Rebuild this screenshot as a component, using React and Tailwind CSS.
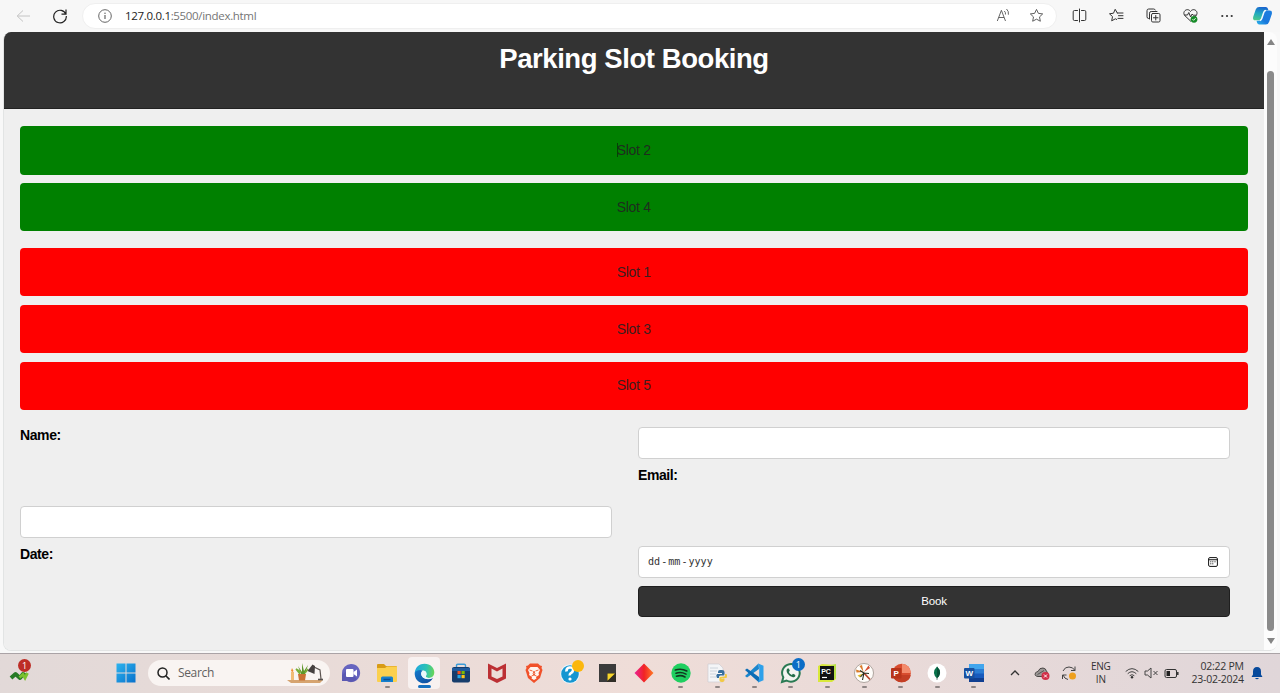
import React from "react";

function Icon({ size = 22, box = 24, className = "", children }) {
  return (
    <svg width={size} height={size} viewBox={`0 0 ${box} ${box}`} fill="none" className={`shrink-0 ${className}`}>
      {children}
    </svg>
  );
}

const line = { stroke: "#333", strokeWidth: 1, strokeLinecap: "round", strokeLinejoin: "round" };

function Toolbar() {
  return (
    <header className="flex h-8 shrink-0 items-center bg-[#f7f7f7] pb-px">
      <div className="flex w-[82px] shrink-0 items-center pl-4">
        <Icon size={16} box={16}>
          <path d="M14 8H1.5M7 2.500L1.200 8L7 13.500" stroke="#c4c4c4" strokeWidth="1" />
        </Icon>
        <Icon size={16} box={16} className="ml-5">
          <path d="M13.900 6.300A6.300 6.300 0 1 0 14.300 8M14 1.500v4.700H9.500" stroke="#222" strokeWidth="1.200" />
        </Icon>
      </div>
      <div className="flex h-[26px] w-[975px] shrink-0 items-center rounded-full border border-[#efefef] bg-white pr-3 pl-[15px]">
        <Icon size={14} box={14}>
          <circle cx="7" cy="7" r="6.300" stroke="#666" />
          <path d="M7 6v4" stroke="#555" strokeWidth="1.100" />
          <circle cx="7" cy="4.200" r=".7" fill="#555" />
        </Icon>
        <div className="ml-[13px] flex-1 font-['Open_Sans',sans-serif] text-[11.500px] tracking-[-0.320px] text-[#757575]">
          <span className="text-[#1c1c1c]">127.0.0.1</span>:5500/index.html
        </div>
        <Icon size={15} box={15} className="mr-[18px]">
          <path d="M1.300 13L5.400 2.300L9.500 13M2.700 9.500H8M8.300 3Q9.800 4.300 9.500 6.500M10.500 1Q13 3.200 12.400 6.700" stroke="#555" strokeWidth=".9" />
        </Icon>
        <Icon size={15} box={16}>
          <path d="M8 1.500l2 4.200 4.600.6-3.400 3.200.9 4.600L8 11.900l-4.100 2.200.9-4.600L1.400 6.300 6 5.700z" stroke="#555" strokeLinejoin="round" />
        </Icon>
      </div>
      <div className="flex flex-1 items-center pl-[15px]">
        <Icon size={15} box={15} className="mr-[22px]">
          <path d="M5.500 2.500H2.500a1.300 1.300 0 0 0-1.300 1.300v7.400a1.300 1.300 0 0 0 1.300 1.300h3M9.500 2.500h3a1.300 1.300 0 0 1 1.300 1.300v7.400a1.300 1.300 0 0 1-1.300 1.300h-3M7.500 1v13" {...line} />
        </Icon>
        <Icon size={15} box={15} className="mr-[22px]">
          <path d="M8.300 5L6.200 1.300 4.500 5.200l-4 .6 3 2.800-.8 4.200 3.700-2 1.300.7M8.300 5H14M9.500 7.700H14M9 10.400h5" {...line} />
        </Icon>
        <Icon size={15} box={15} className="mr-[22px]">
          <path d="M3.200 10.500H2.700A1.700 1.700 0 0 1 1 8.800V2.700A1.700 1.700 0 0 1 2.700 1h5A1.700 1.700 0 0 1 9.300 2M3.500 11V5.200a1.700 1.700 0 0 1 1.700-1.700H11" {...line} />
          <rect x="5.500" y="5.500" width="8.500" height="8.500" rx="1.300" {...line} />
          <path d="M9.750 7.500v4.500M7.500 9.750h4.500" {...line} />
        </Icon>
        <Icon size={15} box={15} className="mr-[22px]">
          <path d="M7.500 13L2 7.800C-.7 4.800 2 1.300 4.800 1.700c1.400.1 2.100 1 2.700 1.800.6-.8 1.300-1.700 2.700-1.800 2.800-.4 5.500 3.100 2.800 6.100z" {...line} />
          <path d="M1.500 7h3l1.300-2.500L7.600 9l1.500-3 1 1.200h2.500" {...line} />
          <circle cx="11" cy="11.300" r="3.400" fill="#168b28" />
          <path d="M9.500 11.200l1.100 1.100 2-2.100" stroke="#fff" strokeWidth=".9" />
        </Icon>
        <Icon size={14} box={14} className="mr-[18px]">
          <circle cx="2.300" cy="7" r="1.100" fill="#333" />
          <circle cx="7" cy="7" r="1.100" fill="#333" />
          <circle cx="11.700" cy="7" r="1.100" fill="#333" />
        </Icon>
        <Icon size={21} box={22}>
          <defs>
            <linearGradient id="cpA" x1="0.5" y1="0" x2="0.3" y2="1">
              <stop stopColor="#1a65cf" /><stop offset=".5" stopColor="#20a9c0" /><stop offset="1" stopColor="#4bc98a" />
            </linearGradient>
            <linearGradient id="cpB" x1="1" y1="0" x2="0" y2="1">
              <stop stopColor="#1d7fe0" /><stop offset=".6" stopColor="#1a78dc" /><stop offset="1" stopColor="#2cb5ea" />
            </linearGradient>
          </defs>
          <path d="M7.500 2h7q1.600 0 2.200 1.800l.5 1.700h-2.500q-1.700 0-2.300 2L10.200 14q-.7 2-2.600 2H3.500Q.5 16 1.200 12.500L4 4.500Q5 2 7.500 2z" fill="url(#cpA)" />
          <path d="M14.500 20.500h-7q-1.600 0-2.200-1.800l-.5-2.200h2.800q2 0 2.700-2l2.200-6.700q.6-2 2.500-2h3.500q3 0 2.300 3.500L18 17.500q-1 3-3.500 3z" fill="url(#cpB)" />
          <path d="M14.700 5.700q-1.700 0-2.300 1.900l-2.200 6.600q-.5 1.600-1.900 2" stroke="#eefaff" strokeWidth="1.600" />
        </Icon>
      </div>
    </header>
  );
}

function Slot({ label, color, caret }) {
  return (
    <div className={`flex h-[48.500px] items-center justify-center rounded-[4px] text-[14px] tracking-[-0.300px] text-[#222]/90 ${color}`}>
      <span className="relative">
        {caret && <span className="absolute top-[3px] left-0 h-[14px] w-px bg-[#063f06]" />}
        {label}
      </span>
    </div>
  );
}

const field = "flex h-[32px] w-full items-center rounded-[4px] border border-[#d0d0d0] bg-white";

function BookingPage() {
  return (
    <main className="min-w-0 flex-1 bg-[#efefef] font-['Liberation_Sans',Arial,sans-serif] text-black">
      <div className="flex h-[77px] justify-center border-b border-[#222] bg-[#333] pt-[11px]">
        <h1 className="text-[27.500px] leading-8 font-bold tracking-[-0.430px] text-white">Parking Slot Booking</h1>
      </div>
      <section className="mr-[16.500px] ml-4 mt-[17px] flex flex-col gap-[8.300px]">
        <Slot label="Slot 2" color="bg-[#008000]" caret />
        <Slot label="Slot 4" color="bg-[#008000]" />
      </section>
      <section className="mr-[16.500px] ml-4 mt-[16.700px] flex flex-col gap-[8.300px]">
        <Slot label="Slot 1" color="bg-[#ff0000]" />
        <Slot label="Slot 3" color="bg-[#ff0000]" />
        <Slot label="Slot 5" color="bg-[#ff0000]" />
      </section>
      <form className="mt-[17px] ml-4 grid grid-cols-[592px_592px] gap-x-[26px] text-[14px] leading-4 font-bold tracking-[-0.400px]">
        <label className="h-10">Name:</label>
        <div className={field} />
        <div className="h-[39px]" />
        <label className="h-[39px]">Email:</label>
        <div className={field} />
        <div className="h-10" />
        <label className="h-10">Date:</label>
        <div className={`${field} justify-between pr-[11px] pl-[9px] tracking-normal`}>
          <span className="font-['DejaVu_Sans_Mono',monospace] text-[10.100px] font-normal text-[#333]">
            dd<span className="mx-px">-</span>mm<span className="mx-px">-</span>yyyy
          </span>
          <Icon size={10} box={10}>
            <rect x=".6" y=".6" width="8.800" height="8.800" rx="1.300" stroke="#111" />
            <path d="M.6 2.700h8.800" stroke="#111" strokeWidth="1.100" />
            <path d="M4.300 4.800h1M6.500 4.800h1M2.300 6.800h1M4.300 6.800h1M2.300 4.800h1" stroke="#111" strokeWidth="1" />
          </Icon>
        </div>
        <div />
        <button type="button" className="h-[31px] rounded-[4px] border border-[#1f1f1f] bg-[#333] pb-px text-[11.500px] font-normal tracking-[-0.200px] text-white">Book</button>
      </form>
    </main>
  );
}

function Scrollbar() {
  return (
    <aside className="flex w-[13px] shrink-0 flex-col items-center bg-[#fcfcfc] pt-[6px] pb-[5px]">
      <Icon size={8} box={8}><path d="M4 1L8 7H0z" fill="#858585" /></Icon>
      <div className="mt-[25px] w-[7px] flex-1 rounded-full bg-[#8a8a8a]" />
      <Icon size={8} box={8} className="mt-[6px]"><path d="M4 7L8 1H0z" fill="#858585" /></Icon>
    </aside>
  );
}

function TaskButton({ children, running, active }) {
  return (
    <div className="flex w-[36.670px] shrink-0 justify-center">
      <div className={`relative flex h-8 w-8 items-center justify-center rounded-[4px] ${active ? "bg-[#f8f1f0]" : ""}`}>
        {children}
        {running && <span className="absolute bottom-px h-[2.500px] w-[5px] rounded-full bg-[#8e8584]" />}
        {active && <span className="absolute bottom-px h-[3px] w-[13px] rounded-full bg-[#1670c0]" />}
      </div>
    </div>
  );
}

function TaskIcons() {
  return (
    <>
      <TaskButton>
        <Icon size={20} box={20}>
          <path d="M10 1a9 9 0 1 1-4 17H1V10a9 9 0 0 1 9-9z" fill="#6664bf" />
          <path d="M1 12l6-5 9 9-3 2.500Q9 20 6 18H1z" fill="#4d4ba6" opacity=".5" />
          <rect x="5" y="6" width="7.500" height="8" rx="1" fill="#fff" />
          <path d="M12.500 9l3.500-2.500v7L12.500 11z" fill="#fff" />
        </Icon>
      </TaskButton>
      <TaskButton running>
        <Icon size={22} box={22}>
          <path d="M1 3q0-1 1-1h6l2 2h10q1 0 1 1v3H1z" fill="#d89b16" />
          <path d="M1 6h8l2-1.500h10V19q0 1-1 1H2q-1 0-1-1z" fill="#fbd04e" />
          <path d="M5 20v-4q0-1.500 1.500-1.500h9Q17 14.500 17 16v4z" fill="#1680ce" />
          <path d="M7.500 17.500h7" stroke="#0b4f93" strokeWidth="1.500" />
        </Icon>
      </TaskButton>
      <TaskButton active>
        <Icon size={21} box={24}>
          <defs>
            <linearGradient id="edA" x1="0" y1="0.2" x2="1" y2=".3">
              <stop stopColor="#1fa6e0" /><stop offset=".6" stopColor="#2dc3b4" /><stop offset="1" stopColor="#65d45b" />
            </linearGradient>
            <linearGradient id="edB" x1="0" y1="0" x2="1" y2="1">
              <stop stopColor="#1279cb" /><stop offset="1" stopColor="#114a9b" />
            </linearGradient>
          </defs>
          <path d="M.8 11C1.500 4.500 6.500.8 12 .8c7 0 11.200 5 11.200 9.700 0 4.300-3 6.500-6.200 6.500-2.700 0-4-1-3.500-2 1.800-2.500.5-6.500-4.500-6.500-4.500 0-7.500 2-8.200 2.500z" fill="url(#edA)" />
          <path d="M.8 11C2.500 8.500 6.500 7 10 8.600 7.500 10.500 7.600 14 10 16.300c3 2.700 8 2.700 11.800.3C20 20.800 16.500 23.200 12 23.200 5 23.200.4 17.500.8 11z" fill="url(#edB)" />
          <path d="M10 8.600c3.700-.3 5.500 3.500 3.700 6-.8 1.500.8 2.600 3.800 2.500 2-.1 3.600-.7 4.600-1.500l-.5 1.500c-3.800 2-8.700 1.800-11.600-.8C7.600 14 7.500 10.500 10 8.600z" fill="#e9f6fa" />
        </Icon>
      </TaskButton>
      <TaskButton>
        <Icon size={20} box={20}>
          <path d="M5.500 4.500V2.500q0-1.300 1.300-1.300h6.400q1.300 0 1.300 1.300v2" stroke="#3b9bd7" strokeWidth="1.400" />
          <rect x="1" y="4" width="18" height="15.500" rx="2" fill="#173d6c" />
          <path d="M1 5h18v3H1z" fill="#1e5a9d" />
          <path d="M6.500 8h3.200v3.200H6.500z" fill="#f25022" /><path d="M10.500 8h3.200v3.200h-3.200z" fill="#7fba00" />
          <path d="M6.500 12h3.200v3.200H6.500z" fill="#22a8ea" /><path d="M10.500 12h3.200v3.200h-3.200z" fill="#ffc516" />
        </Icon>
      </TaskButton>
      <TaskButton>
        <Icon size={20} box={20}><path d="M1 .5l9 4.500 9-4.500v15L10 20 1 15.500zM4.500 5.500v8L10 16l5.500-2.500v-8L10 8.500z" fill="#bc3034" fillRule="evenodd" /></Icon>
      </TaskButton>
      <TaskButton>
        <Icon size={20} box={20}>
          <path d="M6 .5h8l2 2 2 .5-.5 2 1 2L16 15l-6 5-6-5-2.500-8 1-2L2 3l2-.5z" fill="#f1512a" />
          <path d="M6.500 4h7l2.500 3-1.500 3 .5 2-3 2 .5 1.500L10 17l-2.500-1.500L8 14l-3-2 .5-2L4 7z" fill="#fff4ef" />
          <path d="M5.500 7l3 1M14.500 7l-3 1M10 8l-1 3 1 1 1-1zM7.500 13l2.500-1 2.500 1" stroke="#ed572d" strokeWidth=".9" />
        </Icon>
      </TaskButton>
      <TaskButton>
        <Icon size={26} box={26}>
          <circle cx="12" cy="14" r="9.800" fill="#edf5fa" /><circle cx="12" cy="14" r="8.800" fill="#1596d1" />
          <path d="M8.500 11.500q-.5-3.500 3-4 4-.3 3.500 3-.3 1.800-2.400 2.800-1 .7-.8 2.200" stroke="#fff" strokeWidth="2.600" />
          <circle cx="12" cy="19" r="1.600" fill="#fff" />
          <circle cx="20" cy="6" r="6" fill="#fbb70d" />
        </Icon>
      </TaskButton>
      <TaskButton>
        <Icon size={18} box={18}><path d="M1 0h17v9l-9 9H1z" fill="#3b3b3b" /><path d="M9 9h9v9H9z" fill="#302d26" /><path d="M9.500 9.500H17L9.500 16.800z" fill="#f8d62c" /></Icon>
      </TaskButton>
      <TaskButton>
        <Icon size={20} box={20}>
          <defs><linearGradient id="dia"><stop stopColor="#eb2196" /><stop offset=".5" stopColor="#f12325" /><stop offset="1" stopColor="#ff7a26" /></linearGradient></defs>
          <path d="M10 .5l9.500 9.500-9.500 9.500L.5 10z" fill="url(#dia)" />
        </Icon>
      </TaskButton>
      <TaskButton running>
        <Icon size={20} box={20}>
          <circle cx="10" cy="10" r="9.700" fill="#1fcf60" />
          <path d="M4.300 7q6-2 11.500 1M5 10.200q5.200-1.700 10 .9M5.500 13.200q4.700-1.400 8.500.8" stroke="#123820" strokeWidth="1.600" strokeLinecap="round" />
        </Icon>
      </TaskButton>
      <TaskButton running>
        <Icon size={20} box={20}>
          <path d="M1 1h11l4 4v14H1z" fill="#f4f5f7" stroke="#cdcdd2" strokeWidth=".7" />
          <path d="M3 5h8M3 8h7M3 11h6M3 14h6" stroke="#c4cbd6" strokeWidth=".8" />
          <path d="M15 7h-2q-2 0-2 2v1h4v1h-5q-1.500 1.500 0 4h2v-1q0-1.500 1.500-1.500H16q1.500 0 1.500-1.500V9q0-2-2.500-2z" fill="#376f9f" />
          <path d="M14.500 19q3 0 3-2v-1.500h-3V15h5q1-2 0-4h-1.500v1.500q0 1.300-1.500 1.300h-2.800q-1.300 0-1.300 1.300V17q0 2 2.100 2z" fill="#f2c945" />
        </Icon>
      </TaskButton>
      <TaskButton running>
        <Icon size={20} box={20}>
          <path d="M14.500 .500L3.500 10.800 1 13l2 1.500L15 6z" fill="#1b86cd" />
          <path d="M1 7l2-1.500L15 14v5.500z" fill="#0b6cb5" />
          <path d="M14.200.4L19.500 2.700v14.600l-5.300 2.300 1-4.600V5z" fill="#2da0ea" />
        </Icon>
      </TaskButton>
      <TaskButton running>
        <Icon size={22} box={22}>
          <path d="M2 20l1.300-4.700A8.800 8.800 0 1 1 6.500 18.500z" fill="#f3f5f1" stroke="#2a7a53" strokeWidth="2" />
          <path d="M7.500 6.500q-2 2 .2 5.200 3.400 4.600 6.800 3.300 1.700-1 .5-2.300l-2-.9-1.200 1.300Q9.500 12.200 8.800 10l1-1.200-.9-2.200z" fill="#236e4a" />
        </Icon>
        <span className="absolute top-px right-[2px] flex h-[13px] w-[13px] items-center justify-center rounded-full bg-[#0c6dc6] font-['Open_Sans',sans-serif] text-[9px] text-white">1</span>
      </TaskButton>
      <TaskButton running>
        <Icon size={20} box={20}>
          <path d="M1 3l4-2 14 1v14l-4 3H1z" fill="#d9e83b" /><path d="M14 2l5-1v14l-5 3z" fill="#b8e045" />
          <rect x="3" y="3" width="14" height="14" fill="#111" />
          <text x="4.200" y="10.500" fill="#fff" fontSize="7" fontWeight="700" fontFamily="Liberation Sans">PC</text>
          <path d="M5 14.500h5" stroke="#fff" strokeWidth="1.200" />
        </Icon>
      </TaskButton>
      <TaskButton running>
        <Icon size={20} box={20}>
          <circle cx="10" cy="10" r="9.500" fill="#fffdfa" stroke="#918680" strokeWidth=".7" />
          <path d="M9.500 9L2 6.500l.5 3zM9.500 9L5.500 3 8 2z" fill="#d97a29" /><path d="M10 9l4.500-6.500L16 5z" fill="#d34b30" />
          <path d="M9 10.500l-5.500 2 2.500 2z" fill="#ddb92f" /><path d="M10 10l6 6.500" stroke="#b8452c" strokeWidth="1.800" />
          <path d="M10 10L8.500 17M10 10l5 .5M10 10l-3.500 4M10 10L6 7.500" stroke="#252c20" strokeWidth="1.100" />
        </Icon>
      </TaskButton>
      <TaskButton running>
        <Icon size={20} box={20}>
          <circle cx="10.700" cy="10" r="9.200" fill="#d84c2e" /><path d="M11 .8A9.200 9.200 0 0 1 19.900 10H11z" fill="#f38b6c" />
          <path d="M1.700 12h18q-1 7.200-9 7.200t-9-7.200z" fill="#c33e24" />
          <rect x="0" y="5" width="10.500" height="10.500" rx="1" fill="#b83319" />
          <text x="2.500" y="13" fill="#fff" fontSize="8" fontWeight="700" fontFamily="Liberation Sans">P</text>
        </Icon>
      </TaskButton>
      <TaskButton running>
        <Icon size={20} box={20}>
          <circle cx="10" cy="10" r="9.500" fill="#fff" /><path d="M10 3.500q-6 6 0 12 6-6 0-12z" fill="#08734b" />
          <path d="M10 3.500q6 6 0 12z" fill="#075238" /><path d="M10 14v3" stroke="#537368" strokeWidth=".8" />
        </Icon>
      </TaskButton>
      <TaskButton running>
        <Icon size={20} box={20}>
          <rect x="5" y="1" width="15" height="18" rx="1" fill="#185abd" /><path d="M5 1h15v5H5z" fill="#41a5ed" /><path d="M5 6h15v4.500H5z" fill="#2b7cd3" /><path d="M5 15h15v4H5z" fill="#103f91" />
          <rect x="0" y="5" width="10.500" height="10.500" rx="1" fill="#17509f" />
          <text x="1.500" y="13" fill="#fff" fontSize="8" fontWeight="700" fontFamily="Liberation Sans">W</text>
        </Icon>
      </TaskButton>
    </>
  );
}

function Taskbar() {
  return (
    <footer className="flex h-10 shrink-0 items-center border-t border-[#aaa3a6] bg-linear-to-r from-[#e2d9d8] via-[#efddd8] to-[#e0d6d9] pb-px font-['Open_Sans',sans-serif] text-[#333]">
      <div className="w-[116px] shrink-0 pl-[9px]">
        <div className="relative h-6 w-6">
          <Icon size={24} box={24}>
            <path d="M2 17l4.500-4 4.500 4 3-4 3 2" stroke="#267a25" strokeWidth="4" strokeLinejoin="round" />
            <path d="M10.500 16.500l3.500-3 2 3.500 2.500-5" stroke="#7bc22e" strokeWidth="2.800" />
          </Icon>
          <span className="absolute -top-[2px] left-[9px] flex h-[13px] w-[13px] items-center justify-center rounded-full bg-[#bd2d26] text-[9px] text-white">1</span>
        </div>
      </div>
      <Icon size={20} box={20}>
        <defs><linearGradient id="win" x1="0" y1="0" x2="1" y2="1"><stop stopColor="#2db4ee" /><stop offset="1" stopColor="#0871cc" /></linearGradient></defs>
        <path d="M.5.500h9v9h-9zM10.500.500h9v9h-9zM.5 10.500h9v9h-9zM10.500 10.500h9v9h-9z" fill="url(#win)" />
      </Icon>
      <div className="ml-3 flex h-[26px] w-[182px] shrink-0 items-center rounded-full bg-[#f9f4f2] pr-1 pl-[9px] text-[12px] tracking-[-0.350px] text-[#626060]">
        <Icon size={13} box={13}><circle cx="5.500" cy="5.500" r="4.500" stroke="#222" strokeWidth="1.500" /><path d="M8.800 8.800l3.700 3.700" stroke="#222" strokeWidth="1.600" /></Icon>
        <span className="ml-2 flex-1">Search</span>
        <svg width="40" height="22" viewBox="0 0 40 22" fill="none" className="shrink-0">
          <path d="M1 18h36l-3 3H5z" fill="#d6a470" />
          <path d="M5 10h3v8H5z" fill="#f1bb77" /><path d="M6 6l1.500 3-1 1-1.500-1z" fill="#f08a2b" />
          <path d="M15 12L12 4l4 6V1l2 8 4-6-3 9z" fill="#5f972c" /><path d="M14 12L10 7l5 3M19 11l3-4" stroke="#79ae39" strokeWidth="1.500" />
          <path d="M12 12h8l-1 6.500h-6z" fill="#ca7234" />
          <path d="M27 4.500l7 3.500 1 9" stroke="#5c5552" strokeWidth="1.200" /><path d="M21.500 9l5-6.500L29 4l-.5 8z" fill="#45403f" /><path d="M32 17.500h5" stroke="#55504e" strokeWidth="1.600" />
        </svg>
      </div>
      <div className="ml-[2.500px] flex shrink-0 items-center"><TaskIcons /></div>
      <div className="flex min-w-0 flex-1 items-center pl-[17.500px]">
        <Icon size={10} box={10}><path d="M1 7l4-4 4 4" stroke="#333" strokeWidth="1.300" /></Icon>
        <Icon size={16} box={16} className="ml-[14px]">
          <path d="M4 11.500Q0 11 1.500 8 2.300 6.500 4 6.500 5.500 2.500 9 3q3 .3 3.500 3.500l1 .5L10 11.500z" fill="#9d9896" stroke="#4a4645" />
          <path d="M3.500 9.500l6.500-4" stroke="#444" strokeWidth=".8" />
          <circle cx="11.500" cy="11" r="4" fill="#d22f48" /><path d="M10 9.500l3 3M13 9.500l-3 3" stroke="#fff" />
        </Icon>
        <Icon size={16} box={16} className="ml-[11px]">
          <path d="M2 6Q4 1.700 8 2q4 0 6 3.500M14 1.500v4h-4M7 14.500Q3.500 14 2 10M1.500 14v-4h4" stroke="#444" />
          <circle cx="11.500" cy="11" r="3.500" fill="#eea01e" />
        </Icon>
        <div className="ml-[9px] w-[30px] shrink-0 text-center text-[10px] leading-[13px] tracking-[-0.200px]">ENG<br />IN</div>
        <Icon size={14} box={14} className="ml-[9px]">
          <path d="M.7 5.500Q7-.2 13.300 5.500M2.700 7.700q4.300-4 8.600 0M4.700 9.700Q7 7.700 9.300 9.700" stroke="#444" /><circle cx="7" cy="11.300" r="1.200" fill="#333" />
        </Icon>
        <Icon size={14} box={14} className="ml-[5px]">
          <path d="M1 5h2.500L7 2v10L3.500 9H1zM9.500 5l4 4M13.500 5l-4 4" stroke="#444" />
        </Icon>
        <Icon size={15} box={15} className="ml-[6px]">
          <rect x="1" y="3.500" width="11.500" height="8" rx="1.500" stroke="#333" /><path d="M2.500 5H6v5H2.500z" fill="#222" /><path d="M13.800 6v3" stroke="#333" strokeWidth="1.500" />
        </Icon>
        <div className="ml-[5px] w-[60px] shrink-0 text-right text-[10.500px] leading-[13px] tracking-[-0.250px] whitespace-nowrap">02:22 PM<br />23-02-2024</div>
        <Icon size={14} box={14} className="ml-[6px]">
          <path d="M7 1q4 0 4 4.500v3L12.500 11h-11L3 8.500v-3Q3 1 7 1zM5 12h4q-2 2.500-4 0z" fill="#07499b" />
        </Icon>
      </div>
    </footer>
  );
}

export default function App() {
  return (
    <div className="flex h-[693px] w-[1280px] flex-col overflow-hidden bg-[#f8f8f8]">
      <Toolbar />
      <div className="mr-[3px] mb-[2px] ml-[3px] flex min-h-0 flex-1 overflow-hidden rounded-lg border-b border-l border-[#e2e4e4]">
        <BookingPage />
        <Scrollbar />
      </div>
      <Taskbar />
    </div>
  );
}
